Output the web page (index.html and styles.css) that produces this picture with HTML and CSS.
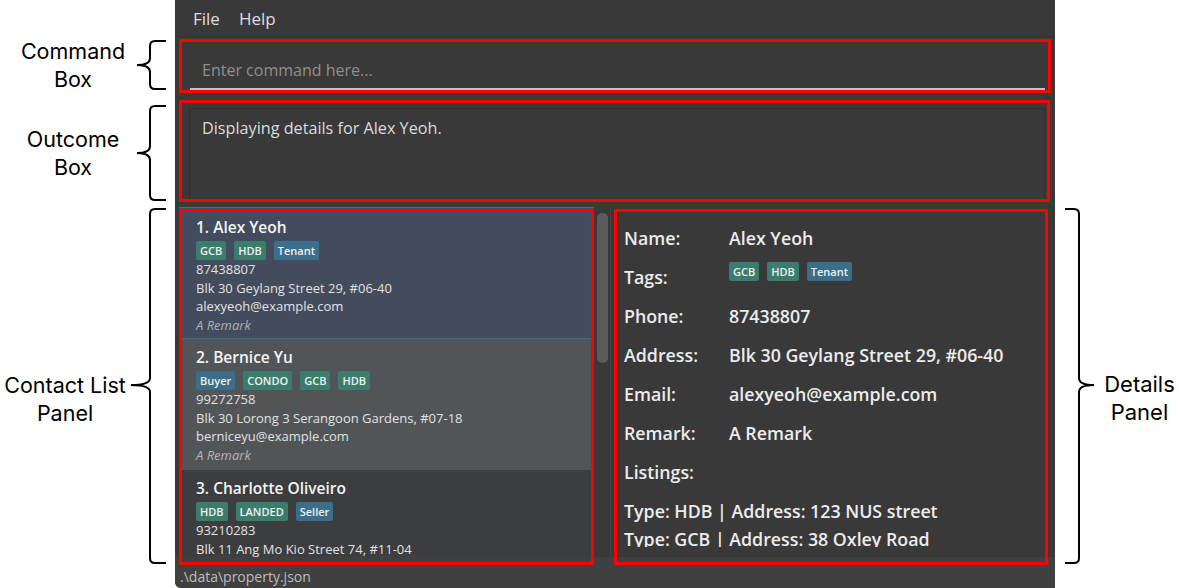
FILE: index.html
```html
<!DOCTYPE html>
<html>
<head>
<meta charset="utf-8">
<title>Property App</title>
<link rel="stylesheet" href="styles.css">
</head>
<body>
<div class="page">
  <aside class="ann-left">
    <div class="anno a-cmd">
      <div class="lbl">Command<br>Box</div>
      <svg class="brace" width="32" height="50" viewBox="0 0 32 50"><path d="M30 1 H19 Q14 1 14 6 V18 Q14 25 1 25 Q14 25 14 32 V44 Q14 49 19 49 H30"/></svg>
    </div>
    <div class="anno a-out">
      <div class="lbl">Outcome<br>Box</div>
      <svg class="brace" width="32" height="96" viewBox="0 0 32 96"><path d="M30 1 H19 Q14 1 14 6 V41 Q14 48 1 48 Q14 48 14 55 V90 Q14 95 19 95 H30"/></svg>
    </div>
    <div class="anno a-list">
      <div class="lbl">Contact List<br>Panel</div>
      <svg class="brace" width="38" height="356" viewBox="0 0 38 356"><path d="M36 1 H25 Q20 1 20 6 V170 Q20 177 1 177 Q20 177 20 184 V350 Q20 355 25 355 H36"/></svg>
    </div>
  </aside>

  <main class="app">
    <div class="menubar"><span>File</span><span>Help</span></div>

    <div class="cmd-box">
      <div class="cmd-field">Enter command here...</div>
    </div>

    <div class="out-box">
      <div class="out-inner">Displaying details for Alex Yeoh.</div>
    </div>

    <div class="main-row">
      <div class="list-box annotated">
        <div class="list-view">
          <div class="card selected">
            <div class="name">1. Alex Yeoh</div>
            <div class="tags"><span class="tag g">GCB</span><span class="tag g">HDB</span><span class="tag b">Tenant</span></div>
            <div class="line">87438807</div>
            <div class="line">Blk 30 Geylang Street 29, #06-40</div>
            <div class="line">alexyeoh@example.com</div>
            <div class="line remark">A Remark</div>
          </div>
          <div class="card odd">
            <div class="name">2. Bernice Yu</div>
            <div class="tags"><span class="tag b">Buyer</span><span class="tag g">CONDO</span><span class="tag g">GCB</span><span class="tag g">HDB</span></div>
            <div class="line">99272758</div>
            <div class="line">Blk 30 Lorong 3 Serangoon Gardens, #07-18</div>
            <div class="line">berniceyu@example.com</div>
            <div class="line remark">A Remark</div>
          </div>
          <div class="card">
            <div class="name">3. Charlotte Oliveiro</div>
            <div class="tags"><span class="tag g">HDB</span><span class="tag g">LANDED</span><span class="tag b">Seller</span></div>
            <div class="line">93210283</div>
            <div class="line">Blk 11 Ang Mo Kio Street 74, #11-04</div>
          </div>
        </div>
      </div>

      <div class="gutter">
        <div class="thumb"></div>
        <div class="divider"></div>
      </div>

      <div class="detail-box annotated">
        <div class="detail-view">
          <div class="detail-scroll">
            <div class="drow"><span class="dl">Name:</span><span class="dv">Alex Yeoh</span></div>
            <div class="drow"><span class="dl">Tags:</span><span class="dv dtags"><span class="tag g">GCB</span><span class="tag g">HDB</span><span class="tag b">Tenant</span></span></div>
            <div class="drow"><span class="dl">Phone:</span><span class="dv">87438807</span></div>
            <div class="drow"><span class="dl">Address:</span><span class="dv">Blk 30 Geylang Street 29, #06-40</span></div>
            <div class="drow"><span class="dl">Email:</span><span class="dv">alexyeoh@example.com</span></div>
            <div class="drow"><span class="dl">Remark:</span><span class="dv">A Remark</span></div>
            <div class="drow"><span class="dl">Listings:</span></div>
            <div class="listings">
              <div class="listing">Type: HDB | Address: 123 NUS street</div>
              <div class="listing">Type: GCB | Address: 38 Oxley Road</div>
            </div>
          </div>
        </div>
      </div>
    </div>

    <div class="statusbar">.\data\property.json</div>
  </main>

  <aside class="ann-right">
    <div class="anno a-det">
      <svg class="brace" width="32" height="356" viewBox="0 0 32 356"><path d="M1 1 H10 Q15 1 15 6 V170 Q15 177 30 177 Q15 177 15 184 V350 Q15 355 10 355 H1"/></svg>
      <div class="lbl">Details<br>Panel</div>
    </div>
  </aside>
</div>
</body>
</html>
```

FILE: styles.css
```css
html, body {
  margin: 0;
  padding: 0;
  background: #ffffff;
}

.page {
  display: flex;
  width: 1179px;
  height: 588px;
  overflow: hidden;
}

/* ---------- annotations ---------- */
.ann-left, .ann-right {
  flex: none;
  display: flex;
  flex-direction: column;
  font-family: "Inter", "Liberation Sans", sans-serif;
  font-size: 21.5px;
  line-height: 28px;
  color: #000;
}
.ann-left { width: 175px; }
.ann-right { width: 124px; font-size: 22px; }

.anno {
  display: flex;
  align-items: center;
}
.brace {
  flex: none;
  fill: none;
  stroke: #000;
  stroke-width: 2;
}
.a-cmd { margin-top: 40px; height: 50px; }
.a-out { margin-top: 15px; height: 96px; }
.a-list { margin-top: 7px; height: 356px; }
.a-cmd .lbl, .a-out .lbl {
  width: 136px;
  padding-left: 10px;
  box-sizing: border-box;
  text-align: center;
  white-space: nowrap;
}
.a-list .lbl {
  width: 130px;
  text-align: center;
  align-self: flex-start;
  margin-top: 163px;
  white-space: nowrap;
}
.a-det { margin-top: 208px; height: 356px; }
.a-det .brace { margin-left: 9px; }
.a-det .lbl {
  flex: 1;
  padding-left: 4px;
  text-align: center;
  align-self: flex-start;
  margin-top: 162px;
  white-space: nowrap;
}

/* ---------- app ---------- */
.app {
  flex: none;
  width: 880px;
  height: 588px;
  display: flex;
  flex-direction: column;
  background: #393939;
  font-family: "Open Sans", "Noto Sans", sans-serif;
  color: #e6e6e6;
  border-bottom-left-radius: 6px;
}

.menubar {
  height: 36px;
  border-bottom: 1px solid #2f2f2f;
  display: flex;
  align-items: center;
  gap: 19px;
  padding-left: 18px;
  font-size: 17px;
  color: #dedede;
}

.cmd-box {
  margin: 2px 4px 0 4px;
  height: 54px;
  box-sizing: border-box;
  border: 3px solid #ff0000;
  display: flex;
  align-items: flex-end;
  padding: 0 3px 0 8px;
}
.cmd-field {
  flex: 1;
  height: 36px;
  line-height: 32px;
  box-sizing: border-box;
  border-bottom: 2px solid #c4c4c4;
  padding-left: 12px;
  font-size: 16px;
  color: #8f8f8f;
}

.out-box {
  margin: 7px 5px 0 4px;
  height: 102px;
  box-sizing: border-box;
  border: 3px solid #ff0000;
  padding: 5px 2px 0 7px;
  display: flex;
}
.out-inner {
  flex: 1;
  border: 1px solid #2f2f2f;
  border-bottom: none;
  padding: 8px 0 0 12px;
  font-size: 16.2px;
  line-height: 22px;
  color: #dcdcdc;
}

/* ---------- main split ---------- */
.main-row {
  margin-top: 5px;
  height: 358px;
  display: flex;
  background: linear-gradient(#393939 0 350px, #404040 350px);
}

.annotated { position: relative; }
.annotated::after {
  content: "";
  position: absolute;
  left: 0;
  right: 0;
  top: 2px;
  bottom: 0;
  border: 3px solid #ff0000;
  pointer-events: none;
}

.list-box {
  margin-left: 4px;
  width: 415px;
  flex: none;
}
.list-view {
  height: 350px;
  overflow: hidden;
  background: #3c3d3f;
}

.card {
  padding: 7px 0 6px 17px;
  background: #3c3d3f;
}
.card.selected {
  background: #434c5d;
  border-top: 1px solid #3b7088;
  border-bottom: 1px solid #3b7088;
  padding-top: 8px;
  padding-bottom: 4px;
}
.card.odd { background: #515558; }

.name {
  font-size: 15.5px;
  font-weight: 600;
  line-height: 22px;
  color: #f4f4f4;
}
.tags {
  display: flex;
  gap: 8px;
  margin-top: 3px;
  height: 19px;
}
.tag {
  display: inline-flex;
  align-items: center;
  height: 19px;
  padding: 0 4px;
  border-radius: 2px;
  font-size: 11px;
  font-weight: 600;
  color: #f0f0f0;
}
.tag.g { background: #3b7d6d; }
.tag.b { background: #3b6e89; }

.line {
  font-size: 13px;
  line-height: 18.5px;
  color: #e2e2e2;
  white-space: nowrap;
}
.line.remark {
  font-style: italic;
  color: #a8afba;
}
.card.odd .line.remark { color: #b4b6b8; }

.gutter {
  width: 20px;
  flex: none;
  display: flex;
  align-items: flex-start;
}
.thumb {
  margin: 6px 0 0 3px;
  width: 11px;
  height: 150px;
  border-radius: 5px;
  background: #5b5b5b;
}
.divider {
  margin-left: 2px;
  width: 1px;
  height: 350px;
  background: #444444;
}

.detail-box {
  width: 434px;
  flex: none;
}
.detail-view {
  height: 350px;
  background: #393939;
}
.detail-scroll {
  height: 340px;
  overflow: hidden;
  box-sizing: border-box;
  padding: 11px 0 0 10px;
}
.drow {
  display: flex;
  height: 39px;
  align-items: center;
  font-size: 17.8px;
  font-weight: 600;
  color: #ececec;
  white-space: nowrap;
}
.dl { width: 105px; flex: none; }
.dtags {
  display: flex;
  gap: 8px;
  align-self: flex-start;
  margin-top: 5px;
  font-size: 11px;
}
.listings {
  margin-top: 6px;
  font-size: 17.8px;
  font-weight: 600;
  color: #ececec;
}
.listing {
  line-height: 28px;
  white-space: nowrap;
}

.statusbar {
  height: 23px;
  line-height: 23px;
  padding-left: 5px;
  background: #404040;
  font-size: 14px;
  color: #bdbdbd;
  border-bottom-left-radius: 6px;
}
```
